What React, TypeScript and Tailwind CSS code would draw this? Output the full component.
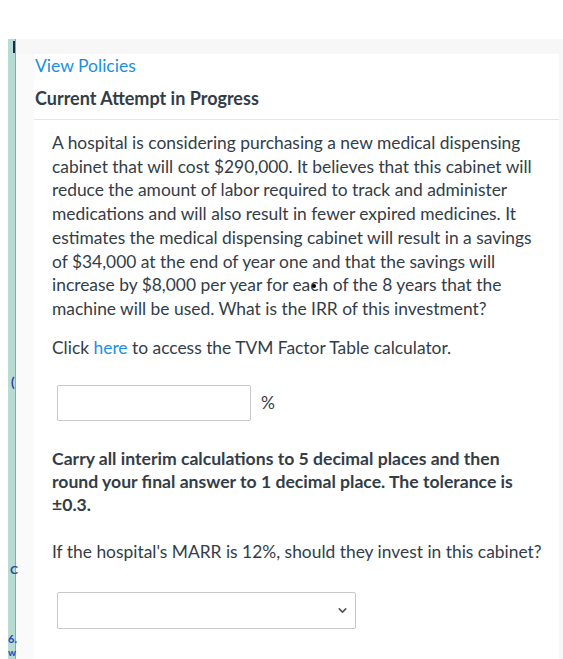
import { ChevronDown } from 'lucide-react';

const App = () => {
  return (
    <div className="w-[563px] h-[659px] overflow-hidden bg-white font-['Lato','Noto_Sans',sans-serif] text-[#333d47]">
      <div className="h-[39px]" />
      <div className="flex h-[620px]">
        <div className="w-[8px] bg-white" />
        {/* desktop strip behind the window */}
        <div className="relative w-[8px] bg-[#b6dcd4] border-r border-[#8da7a1]">
          <span className="absolute left-[5px] top-[2px] h-[12px] w-[2px] bg-[#1c2a4a]" />
          <span className="absolute left-[3px] top-[337px] text-[13px] leading-none font-bold text-[#1e3fa8]">(</span>
          <span className="absolute left-[2px] top-[525px] text-[12px] leading-none font-bold text-[#2a4aa0]">C</span>
          <span className="absolute left-[0px] top-[594px] text-[11px] leading-none font-bold text-[#2348b8]">6.</span>
          <span className="absolute left-[0px] top-[608px] text-[10px] leading-none font-bold text-[#2348b8]">w</span>
        </div>
        <div className="flex-1 flex flex-col bg-[#f7f7f7]">
          <div className="h-[15px]" />
          <div className="flex flex-1">
            <div className="w-[18px] bg-[#fafafa]" />
            <div className="relative w-[525px] bg-white">
              <div className="pl-[1px] text-[17.5px] leading-[24px] text-[#1b8fe3]">View Policies</div>
              <div className="mt-[8px] pl-[1px] text-[18px] leading-[24px] font-bold text-[#333d47]">
                Current Attempt in Progress
              </div>
              <div className="mt-[9px] border-t border-[#e6e6e6]" />
              <div className="pl-[18px] pr-[10px] pt-[11px] text-[17.4px] leading-[23.7px]">
                <p>
                  A hospital is considering purchasing a new medical dispensing cabinet that will cost
                  $290,000. It believes that this cabinet will reduce the amount of labor required to track
                  and administer medications and will also result in fewer expired medicines. It estimates
                  the medical dispensing cabinet will result in a savings of $34,000 at the end of year one
                  and that the savings will increase by $8,000 per year for each of the 8 years that the
                  machine will be used. What is the IRR of this investment?
                </p>
                <p className="mt-[15px]">
                  Click <span className="text-[#1b8fe3]">here</span> to access the TVM Factor Table calculator.
                </p>
                <div className="mt-[26px] ml-[5px] flex items-center gap-[10px]">
                  <div className="w-[194px] h-[36px] rounded-[2px] border border-[#c8c8c8] bg-white" />
                  <span>%</span>
                </div>
                <p className="mt-[26px] pr-[24px] font-bold text-[17.6px] leading-[23px]">
                  Carry all interim calculations to 5 decimal places and then round your final answer to 1
                  decimal place. The tolerance is ±0.3.
                </p>
                <p className="mt-[24px]">If the hospital's MARR is 12%, should they invest in this cabinet?</p>
                <div className="mt-[28px] ml-[5px] w-[299px] h-[37px] rounded-[2px] border border-[#c8c8c8] bg-white flex items-center justify-end pr-[6px]">
                  <ChevronDown size={13} strokeWidth={3} className="text-[#555]" />
                </div>
              </div>
              <span className="absolute left-[278px] top-[230px] w-[4px] h-[4px] rounded-full bg-black" />
            </div>
            <div className="w-[4px]" />
          </div>
        </div>
      </div>
    </div>
  );
};

export default App;
